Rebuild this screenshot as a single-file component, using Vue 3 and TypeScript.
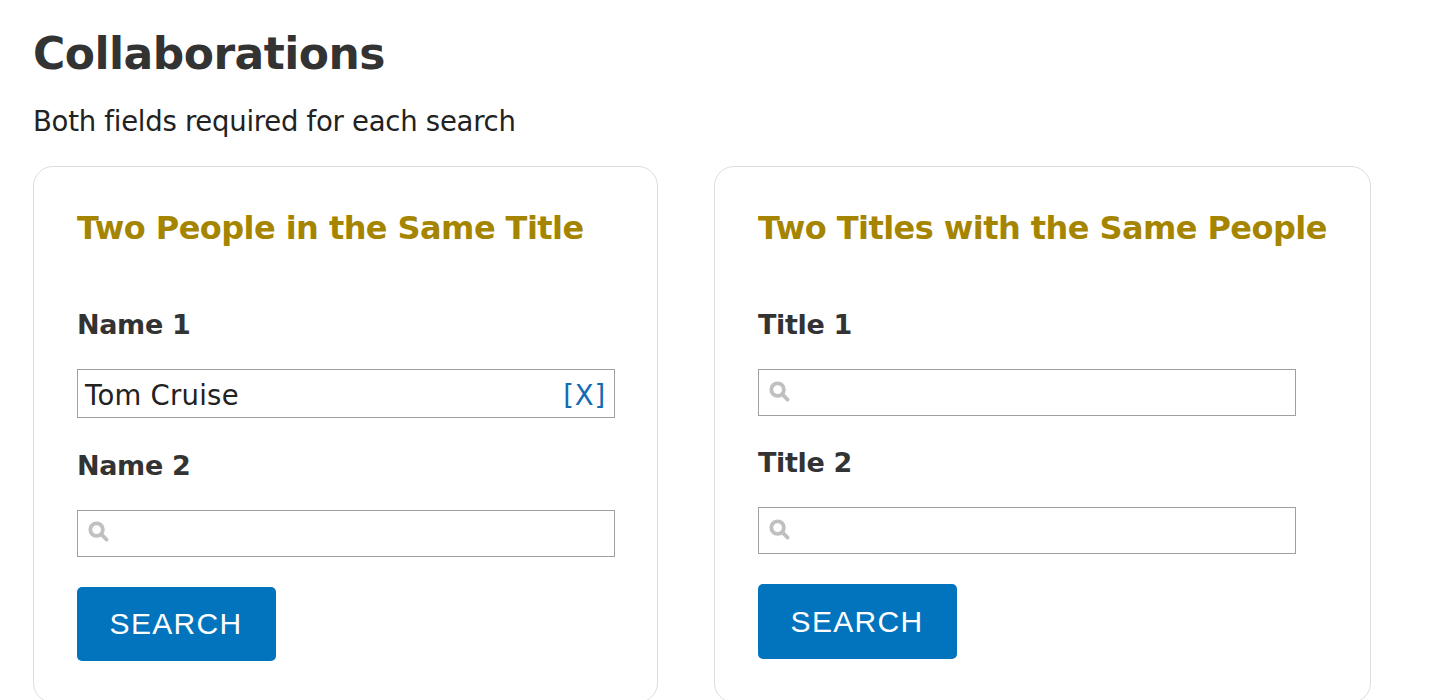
<script setup lang="ts">
import { reactive } from 'vue';

interface Field {
  label: string;
  value: string;
}

interface SearchForm {
  id: string;
  title: string;
  fields: Field[];
}

const forms = reactive<SearchForm[]>([
  {
    id: 'people',
    title: 'Two People in the Same Title',
    fields: [
      { label: 'Name 1', value: 'Tom Cruise' },
      { label: 'Name 2', value: '' },
    ],
  },
  {
    id: 'titles',
    title: 'Two Titles with the Same People',
    fields: [
      { label: 'Title 1', value: '' },
      { label: 'Title 2', value: '' },
    ],
  },
]);

const clearField = (field: Field) => {
  field.value = '';
};
</script>

<template>
  <main class="page">
    <h1 class="page__title">Collaborations</h1>
    <p class="page__hint">Both fields required for each search</p>
    <div class="cards">
      <form
        v-for="form in forms"
        :key="form.id"
        class="card"
        :class="`card--${form.id}`"
        @submit.prevent
      >
        <h2 class="card__title">{{ form.title }}</h2>
        <div v-for="field in form.fields" :key="field.label" class="field">
          <div class="field__label">{{ field.label }}</div>
          <div v-if="field.value" class="field__box field__box--filled">
            <span class="field__value">{{ field.value }}</span>
            <a class="field__clear" @click="clearField(field)">[X]</a>
          </div>
          <div v-else class="field__box">
            <svg class="field__icon" viewBox="0 0 22 22">
              <circle cx="8.6" cy="8.6" r="6.3" />
              <path d="M13.4 13.4L18.6 18.6" />
            </svg>
          </div>
        </div>
        <button class="card__button" type="submit">SEARCH</button>
      </form>
    </div>
  </main>
</template>

<style>
body {
  background-color: #fff;
  overflow: hidden;
}
</style>

<style scoped>
.page {
  box-sizing: border-box;
  height: 700px;
  padding: 28px 33px 0;
  overflow: hidden;
  font-family: Verdana, 'DejaVu Sans', sans-serif;
  font-size: 27.5px;
  line-height: 36px;
  color: #222;
}

.page__title {
  margin: 0 0 23px;
  font-size: 44px;
  line-height: 52px;
  letter-spacing: -0.53px;
  color: #333;
}

.page__hint {
  margin: 0 0 27px;
  letter-spacing: -0.26px;
}

.cards {
  display: flex;
  align-items: flex-start;
  gap: 56px;
}

.card {
  box-sizing: border-box;
  height: 537px;
  padding: 41px 43px 0;
  border: 1px solid #ddd;
  border-radius: 20px;
}

.card--people {
  width: 625px;
}

.card--titles {
  width: 657px;
}

.card__title {
  margin: 0 0 59px;
  font-size: 32px;
  line-height: 40px;
  letter-spacing: -0.56px;
  white-space: nowrap;
  color: #a58500;
}

.field__label {
  margin-bottom: 26px;
  font-size: 27px;
  font-weight: bold;
  letter-spacing: -0.35px;
  color: #333;
}

.field__box {
  box-sizing: border-box;
  display: flex;
  align-items: flex-start;
  width: 538px;
  height: 47px;
  margin-bottom: 29px;
  padding: 11px 10px 0;
  border: 1px solid #a0a0a0;
}

.card--people .field__box {
  padding-top: 10px;
}

.card--people .field__box--filled {
  justify-content: space-between;
  height: 49px;
  margin-bottom: 30px;
  padding: 7px 8px 0 7px;
}

.field__icon {
  width: 22px;
  height: 22px;
  fill: none;
  stroke: #c0c0c0;
  stroke-width: 3.8;
  stroke-linecap: round;
}

.field__value {
  letter-spacing: 0.25px;
}

.field__clear {
  letter-spacing: 0.8px;
  color: #136cb2;
  cursor: pointer;
}

.card__button {
  display: block;
  width: 199px;
  height: 75px;
  margin-top: 30px;
  padding: 0 1px 0 0;
  border: none;
  border-radius: 5px;
  background-color: #0274be;
  color: #fff;
  font-family: 'Liberation Sans', Arial, sans-serif;
  font-size: 30px;
  letter-spacing: 1.3px;
  cursor: pointer;
}

.card--people .card__button {
  height: 74px;
  padding-bottom: 1px;
}
</style>
